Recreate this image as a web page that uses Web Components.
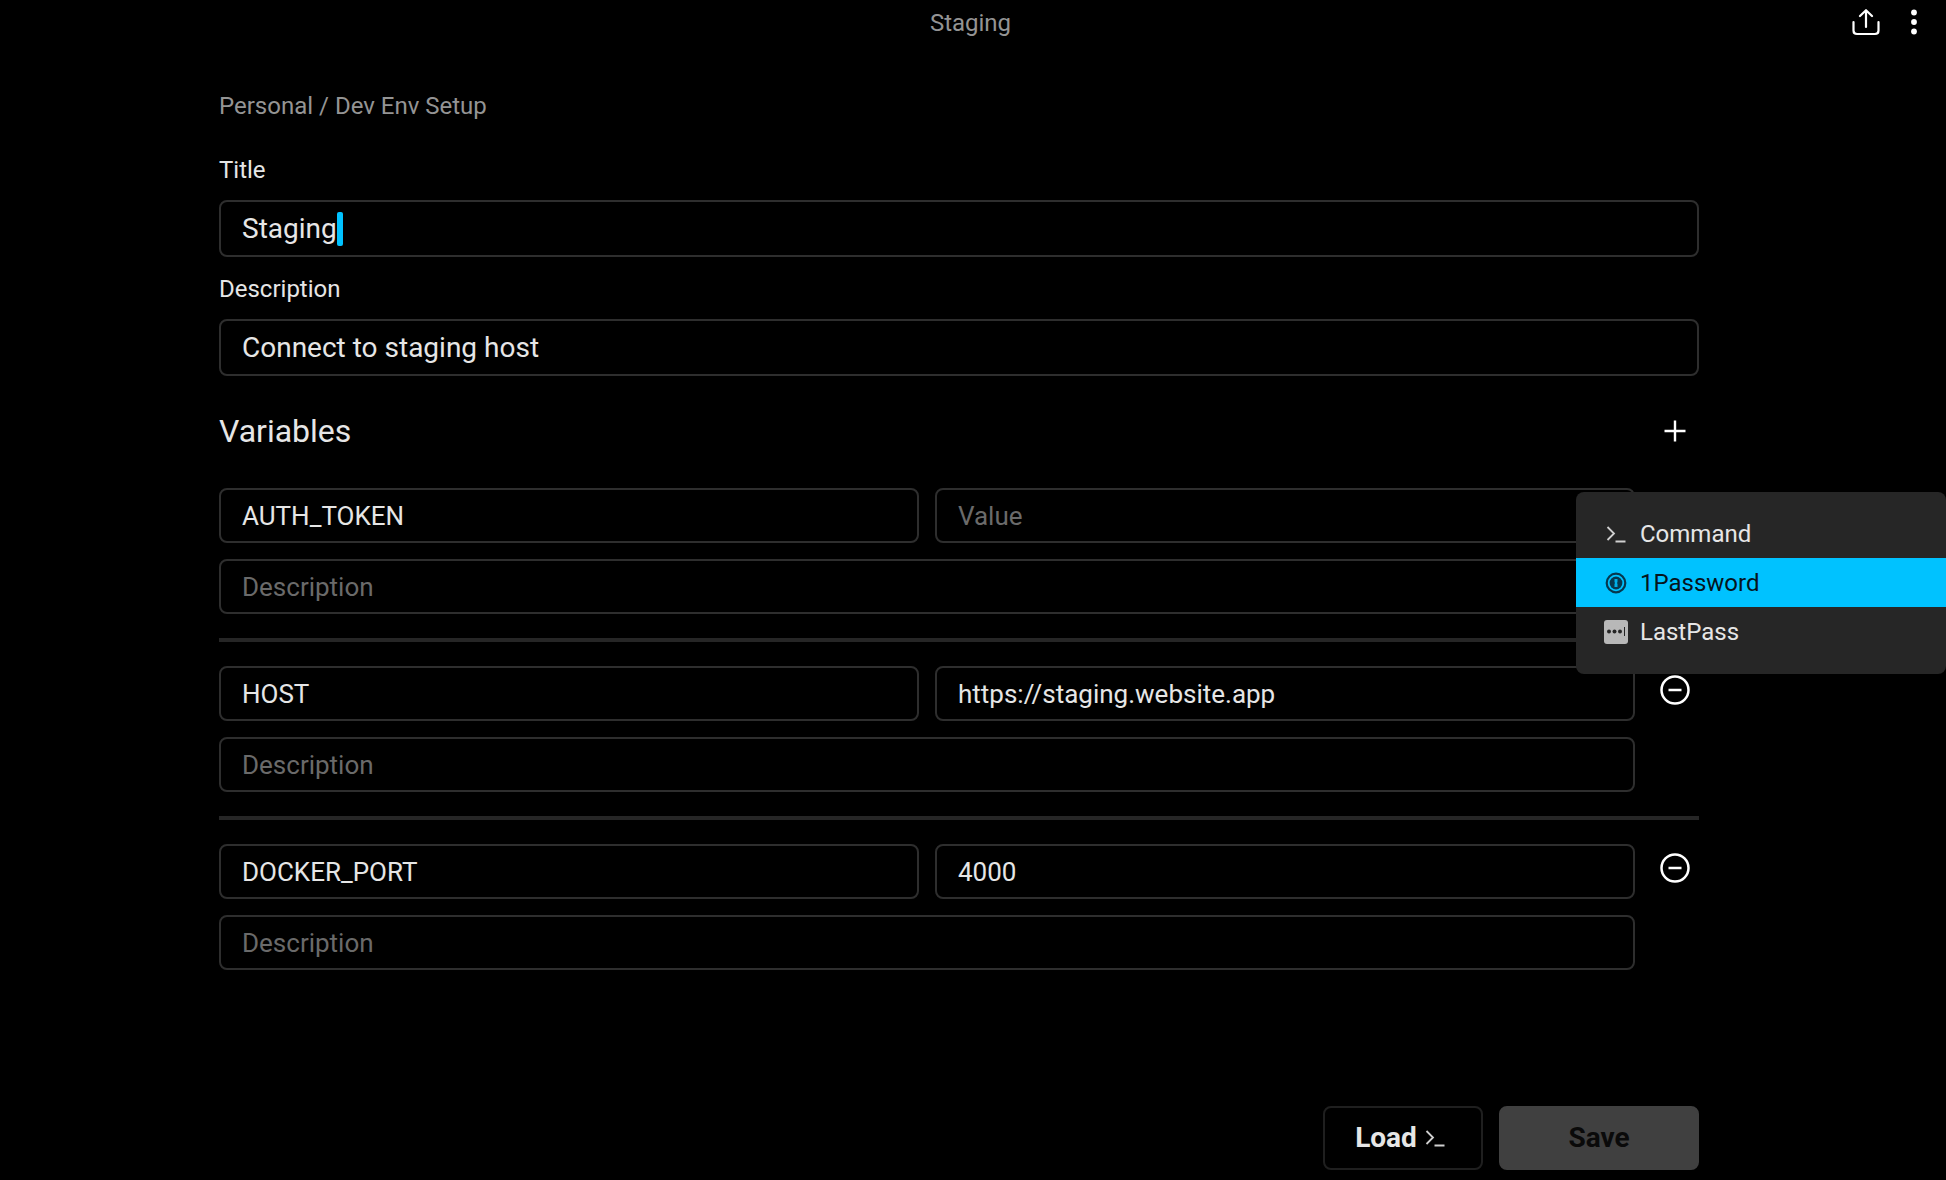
<!DOCTYPE html>
<html lang="en">

<head>
    <meta charset="UTF-8">
    <meta name="viewport" content="width=device-width, initial-scale=1.0">
    <title>Staging</title>
    <style>
        body {
            --text: #e6e6e6;
            --muted: #949494;
            --hint: #6a6a6a;
            --line: #2e2e2e;
            --surface: #262626;
            --accent: #00c2ff;
            --gutter-left: 219px;
            --gutter-right: 247px;
            margin: 0;
            background: #000;
            color: var(--text);
            font: 24px/32px Roboto, "Liberation Sans", sans-serif;
        }
    </style>
</head>

<body>
    <app-page>
        <app-header slot="header">Staging</app-header>

        <bread-crumb>Personal / Dev Env Setup</bread-crumb>
        <text-field label="Title" value="Staging" active></text-field>
        <text-field label="Description" value="Connect to staging host"></text-field>

        <section-head>Variables</section-head>
        <variable-row name="AUTH_TOKEN">
            <popup-menu slot="menu">
                <menu-item icon="terminal">Command</menu-item>
                <menu-item icon="onepassword" selected>1Password</menu-item>
                <menu-item icon="lastpass">LastPass</menu-item>
            </popup-menu>
        </variable-row>
        <variable-row name="HOST" value="https://staging.website.app"></variable-row>
        <variable-row name="DOCKER_PORT" value="4000"></variable-row>

        <action-button slot="actions" icon="terminal">Load</action-button>
        <action-button slot="actions" primary>Save</action-button>
    </app-page>
</body>
<script>
    const icons = {
        share: `<svg width="28" height="28" viewBox="0 0 28 28" fill="none" stroke="#fff" stroke-width="2.200" stroke-linecap="round" stroke-linejoin="round">
            <path d="M14 18V1.500M8 7L14 1.200L20 7M1.500 13V21.500Q1.500 25 5 25H23Q26.500 25 26.500 21.500V13"/></svg>`,
        dots: `<svg width="6" height="28" viewBox="0 0 6 28" fill="#fff">
            <circle cx="3" cy="3.500" r="2.900"/><circle cx="3" cy="13" r="2.900"/><circle cx="3" cy="22.500" r="2.900"/></svg>`,
        plus: `<svg width="22" height="22" viewBox="0 0 22 22" stroke="#fff" stroke-width="2.400">
            <path d="M11 0.500V21.500M0.500 11H21.500"/></svg>`,
        minus: `<svg width="30" height="30" viewBox="0 0 30 30" fill="none" stroke="#fff" stroke-width="2.500">
            <circle cx="15" cy="15" r="13.500"/><path d="M8.500 15H21.500"/></svg>`,
        terminal: `<svg width="24" height="24" viewBox="0 0 24 24" fill="none" stroke="#d0d0d0" stroke-width="1.800">
            <path d="M3.500 5L10 11.500L3.500 18M11.500 19.500H21.500"/></svg>`,
        onepassword: `<svg width="24" height="24" viewBox="0 0 24 24" fill="none" stroke="#06384f">
            <circle cx="12" cy="12" r="9.300" stroke-width="2.200"/>
            <circle cx="12" cy="12" r="6.400" fill="#06384f" stroke="none"/>
            <path d="M10.500 8H13.500V11L13 12L13.500 13V16H10.500V13L11 12L10.500 11Z" fill="#00aee6" stroke="none"/></svg>`,
        lastpass: `<svg width="24" height="24" viewBox="0 0 24 24">
            <rect width="24" height="24" rx="3" fill="#b8b8b8"/>
            <g fill="#262626"><circle cx="5" cy="11.500" r="2"/><circle cx="10.500" cy="11.500" r="2"/><circle cx="16" cy="11.500" r="2"/>
            <rect x="20" y="7" width="1" height="9"/></g></svg>`
    }

    const iconButton = `
        button {
            display: flex;
            padding: 0;
            border: 0;
            background: none;
            cursor: pointer;
        }
    `

    const inputStyle = `
        input {
            box-sizing: border-box;
            min-width: 0;
            border: 0;
            outline: 0;
            background: none;
            color: inherit;
            font: inherit;
        }
        input::placeholder {
            color: var(--hint);
            opacity: 1;
        }
    `

    customElements.define('app-page',
        class extends HTMLElement {
            constructor() {
                super()
                this.attachShadow({ mode: 'open' }).innerHTML = `
                    <style>
                        :host {
                            display: flex;
                            flex-direction: column;
                            box-sizing: border-box;
                            min-height: 100vh;
                            padding-bottom: 10px;
                        }
                        main {
                            padding: 44px var(--gutter-right) 44px var(--gutter-left);
                        }
                        footer {
                            display: flex;
                            justify-content: flex-end;
                            gap: 16px;
                            margin-top: auto;
                            padding-right: var(--gutter-right);
                        }
                    </style>
                    <slot name="header"></slot>
                    <main><slot></slot></main>
                    <footer><slot name="actions"></slot></footer>`
            }
        }
    )

    customElements.define('app-header',
        class extends HTMLElement {
            constructor() {
                super()
                this.attachShadow({ mode: 'open' }).innerHTML = `
                    <style>
                        :host {
                            display: grid;
                            grid-template-columns: 1fr auto 1fr;
                            align-items: center;
                            height: 46px;
                            padding: 0 29px 0 24px;
                            color: var(--muted);
                        }
                        h1 {
                            grid-column: 2;
                            margin: 0;
                            font: inherit;
                        }
                        nav {
                            display: flex;
                            justify-content: flex-end;
                            gap: 31px;
                        }
                        ${iconButton}
                    </style>
                    <h1><slot></slot></h1>
                    <nav>
                        <button aria-label="Share">${icons.share}</button>
                        <button aria-label="More">${icons.dots}</button>
                    </nav>`
            }
        }
    )

    customElements.define('bread-crumb',
        class extends HTMLElement {
            constructor() {
                super()
                this.attachShadow({ mode: 'open' }).innerHTML = `
                    <style>
                        :host {
                            display: block;
                            margin-bottom: 32px;
                            color: var(--muted);
                        }
                    </style>
                    <slot></slot>`
            }
        }
    )

    customElements.define('text-field',
        class extends HTMLElement {
            constructor() {
                super()
                this.attachShadow({ mode: 'open' }).innerHTML = `
                    <style>
                        :host {
                            display: block;
                            margin-bottom: 16px;
                        }
                        label {
                            display: block;
                            margin-bottom: 14px;
                        }
                        .box {
                            display: flex;
                            align-items: center;
                            box-sizing: border-box;
                            height: 57px;
                            padding: 0 21px;
                            border: 2px solid var(--line);
                            border-radius: 8px;
                            font-size: 28px;
                        }
                        input {
                            flex: 1;
                            padding: 0;
                        }
                        /* thick caret right after the text */
                        :host([active]) input {
                            flex: none;
                            field-sizing: content;
                            caret-color: transparent;
                        }
                        .caret {
                            display: none;
                            width: 6px;
                            height: 34px;
                            border-radius: 2px;
                            background: var(--accent);
                        }
                        :host([active]) .caret {
                            display: block;
                        }
                        ${inputStyle}
                    </style>
                    <label for="field"></label>
                    <div class="box"><input id="field" type="text"><span class="caret"></span></div>`
                this.shadowRoot.querySelector('label').textContent = this.getAttribute('label')
                this.shadowRoot.querySelector('input').value = this.getAttribute('value')
            }
        }
    )

    customElements.define('section-head',
        class extends HTMLElement {
            constructor() {
                super()
                this.attachShadow({ mode: 'open' }).innerHTML = `
                    <style>
                        :host {
                            display: flex;
                            align-items: center;
                            justify-content: space-between;
                            margin: 35px 0 37px;
                            padding-right: 13px;
                        }
                        h2 {
                            margin: 0;
                            font-weight: 400;
                            font-size: 32px;
                            line-height: 40px;
                        }
                        ${iconButton}
                    </style>
                    <h2><slot></slot></h2>
                    <button aria-label="Add variable">${icons.plus}</button>`
            }
        }
    )

    customElements.define('variable-row',
        class extends HTMLElement {
            constructor() {
                super()
                this.attachShadow({ mode: 'open' }).innerHTML = `
                    <style>
                        :host {
                            display: block;
                            position: relative;
                        }
                        :host(:not(:last-of-type)) {
                            margin-bottom: 24px;
                            padding-bottom: 24px;
                            border-bottom: 4px solid var(--surface);
                        }
                        .row {
                            display: flex;
                            align-items: flex-start;
                            gap: 25px;
                            padding-right: 9px;
                        }
                        .fields {
                            flex: 1;
                            display: grid;
                            grid-template-columns: 1fr 1fr;
                            gap: 16px;
                        }
                        ${inputStyle}
                        input {
                            width: 100%;
                            height: 55px;
                            padding: 0 21px;
                            border: 2px solid var(--line);
                            border-radius: 8px;
                            font-size: 26px;
                        }
                        .wide {
                            grid-column: span 2;
                        }
                        ${iconButton}
                        button {
                            margin-top: 9px;
                        }
                        ::slotted([slot="menu"]) {
                            position: absolute;
                            top: 4px;
                            right: calc(var(--gutter-right) * -1);
                            z-index: 1;
                        }
                    </style>
                    <div class="row">
                        <div class="fields">
                            <input class="name" type="text" placeholder="Name" aria-label="Name">
                            <input class="value" type="text" placeholder="Value" aria-label="Value">
                            <input class="wide" type="text" placeholder="Description" aria-label="Description">
                        </div>
                        <button aria-label="Remove variable">${icons.minus}</button>
                    </div>
                    <slot name="menu"></slot>`
                this.shadowRoot.querySelector('.name').value = this.getAttribute('name')
                this.shadowRoot.querySelector('.value').value = this.getAttribute('value') || ''
            }
        }
    )

    customElements.define('popup-menu',
        class extends HTMLElement {
            constructor() {
                super()
                this.attachShadow({ mode: 'open' }).innerHTML = `
                    <style>
                        :host {
                            display: block;
                            box-sizing: border-box;
                            width: 370px;
                            padding: 17px 0 18px;
                            border-radius: 8px;
                            background: var(--surface);
                        }
                    </style>
                    <div role="menu"><slot></slot></div>`
            }
        }
    )

    customElements.define('menu-item',
        class extends HTMLElement {
            constructor() {
                super()
                this.attachShadow({ mode: 'open' }).innerHTML = `
                    <style>
                        :host {
                            display: block;
                        }
                        button {
                            display: flex;
                            align-items: center;
                            gap: 12px;
                            width: 100%;
                            height: 49px;
                            padding: 0 28px;
                            border: 0;
                            background: none;
                            color: inherit;
                            font: inherit;
                            text-align: left;
                        }
                        :host([selected]) button {
                            background: var(--accent);
                            color: #06141c;
                        }
                    </style>
                    <button role="menuitem">${icons[this.getAttribute('icon')]}<slot></slot></button>`
            }
        }
    )

    customElements.define('action-button',
        class extends HTMLElement {
            constructor() {
                super()
                const icon = this.getAttribute('icon')
                this.attachShadow({ mode: 'open' }).innerHTML = `
                    <style>
                        :host {
                            display: block;
                        }
                        button {
                            display: flex;
                            align-items: center;
                            justify-content: center;
                            gap: 6px;
                            box-sizing: border-box;
                            min-width: 160px;
                            height: 64px;
                            padding: 0 24px;
                            border: 2px solid #1f1f1f;
                            border-radius: 8px;
                            background: none;
                            color: inherit;
                            font: inherit;
                            font-size: 28px;
                            font-weight: 700;
                        }
                        :host([icon]) button {
                            padding: 0 26px 0 22px;
                        }
                        :host([primary]) button {
                            min-width: 200px;
                            border-color: #404040;
                            background: #404040;
                            color: #0a0a0a;
                        }
                    </style>
                    <button><slot></slot>${icon ? icons[icon] : ''}</button>`
            }
        }
    )
</script>

</html>
